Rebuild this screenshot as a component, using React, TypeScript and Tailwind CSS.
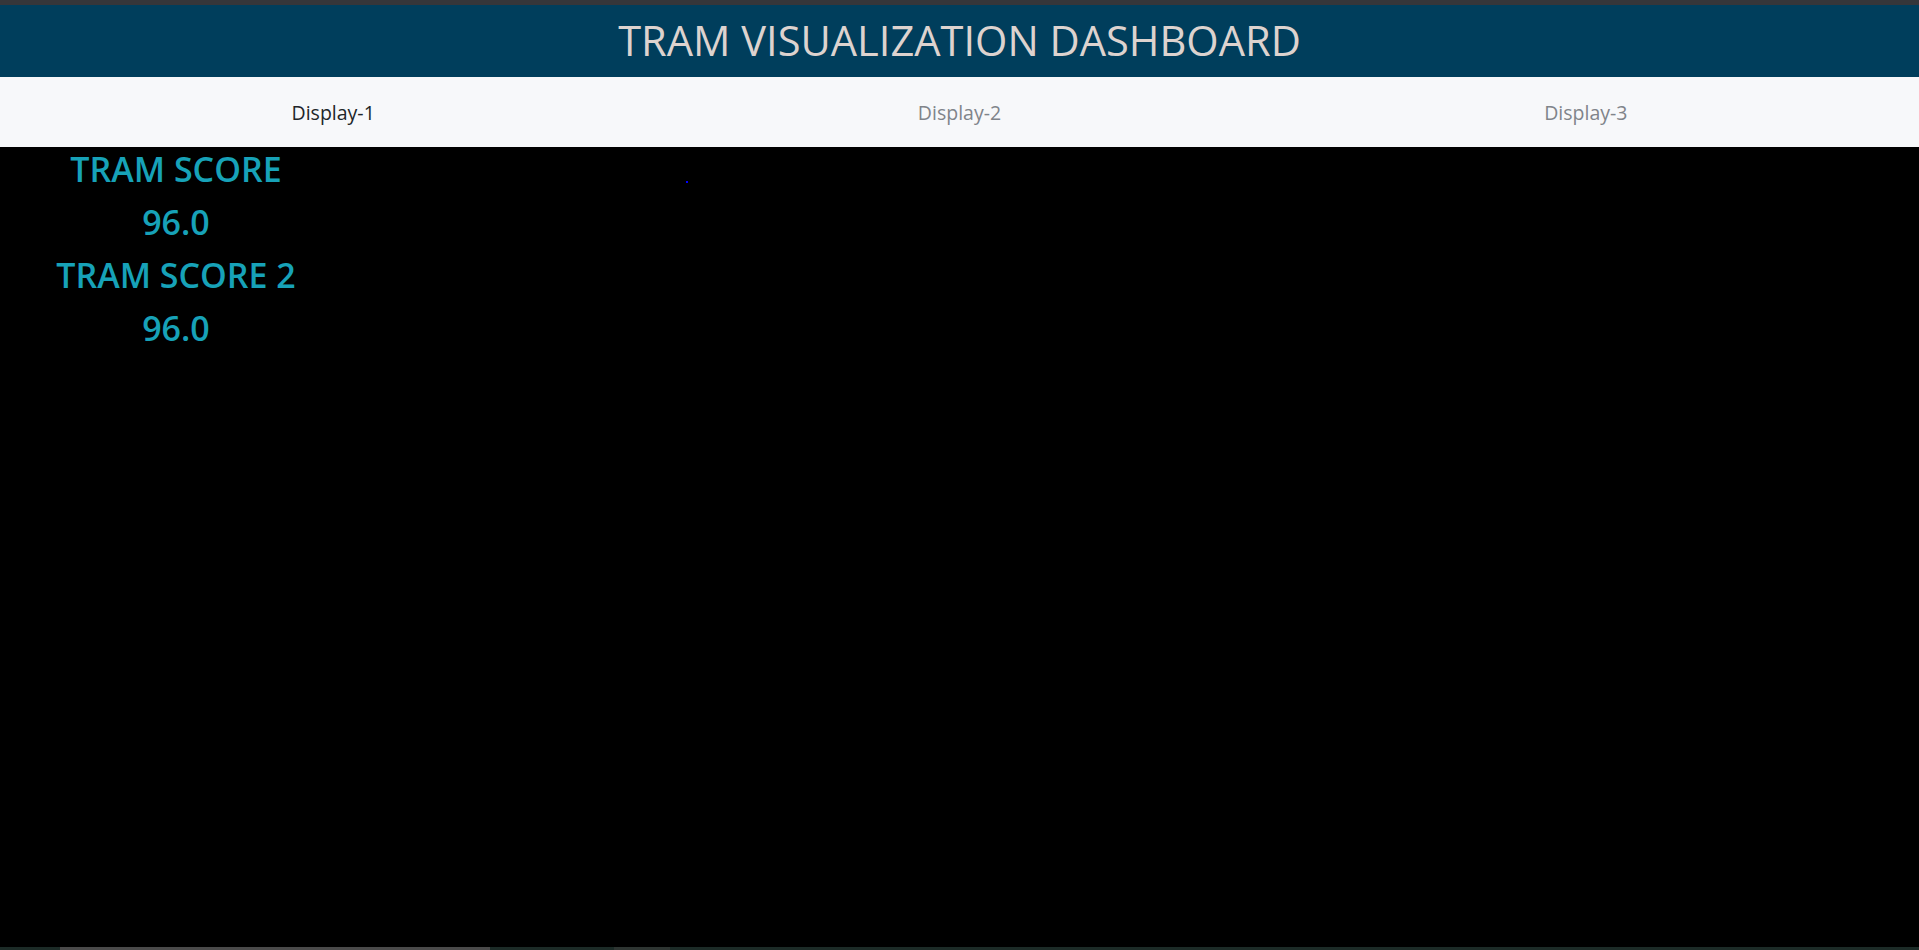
import React from "react";

export default function App() {
  const font = { fontFamily: '"Open Sans", "Noto Sans", sans-serif' };
  return (
    <div className="h-[950px] w-full flex flex-col bg-black overflow-hidden" style={font}>
      <div className="h-[5px] bg-[#35363a]" />
      <div className="h-[72px] bg-[#003e5c] flex items-center justify-center">
        <h1 className="text-[41.6px] leading-none text-[#ddd3cf]">TRAM VISUALIZATION DASHBOARD</h1>
      </div>
      <div className="h-[70px] bg-[#f7f8fa] flex items-center px-[20px] pt-[2px]">
        <div className="flex-1 text-center text-[19.5px] text-[#212529]">Display-1</div>
        <div className="flex-1 text-center text-[19.5px] text-[#80848a]">Display-2</div>
        <div className="flex-1 text-center text-[19.5px] text-[#80848a]">Display-3</div>
      </div>
      <div className="flex-1 flex relative">
        <div className="w-[352px] flex flex-col items-center pt-[1px]">
          <h3 className="text-[34px] font-semibold leading-[42px] mb-[11px] text-[#17a2b8]">TRAM SCORE</h3>
          <h3 className="text-[34px] font-semibold leading-[42px] mb-[11px] text-[#17a2b8]">96.0</h3>
          <h3 className="text-[34px] font-semibold leading-[42px] mb-[11px] text-[#17a2b8]">TRAM SCORE 2</h3>
          <h3 className="text-[34px] font-semibold leading-[42px] mb-[11px] text-[#17a2b8]">96.0</h3>
        </div>
        <div className="absolute left-[686px] top-[34px] w-[2px] h-[2px] bg-[#0000ff]" />
      </div>
      <div className="h-[3px] bg-[#1c2b27] flex">
        <div className="ml-[60px] w-[430px] bg-[#4a4a4a]" />
        <div className="ml-[124px] w-[56px] bg-[#2e3532]" />
      </div>
    </div>
  );
}
